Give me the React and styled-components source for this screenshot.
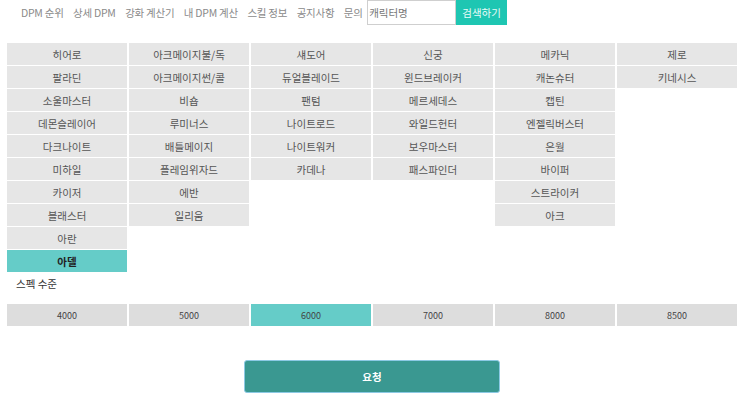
import React, { useState } from "react";
import styled, { createGlobalStyle } from "styled-components";

const GlobalStyle = createGlobalStyle`
  body {
    margin: 0;
    background: #fff;
    font-family: "Noto Sans CJK KR", "Noto Sans", sans-serif;
  }
`;

const Page = styled.div`
  width: 743px;
  padding: 0 6px 0 7px;
  box-sizing: border-box;
`;

const Nav = styled.div`
  display: flex;
  align-items: center;
  height: 25px;
  padding-left: 14px;
  gap: 9.5px;
`;

const NavLink = styled.span`
  font-size: 10.5px;
  color: #8a8a8a;
  white-space: nowrap;
  letter-spacing: -0.25px;
`;

const Search = styled.div`
  display: flex;
  height: 25px;
  margin-left: -5px;
`;

const SearchInput = styled.input`
  width: 89px;
  height: 25px;
  box-sizing: border-box;
  border: 1px solid #cfcfcf;
  padding: 0 1px;
  font-family: inherit;
  font-size: 10.5px;
  color: #555;
  outline: none;
  &::placeholder {
    color: #777;
  }
`;

const SearchButton = styled.button`
  width: 51px;
  height: 25px;
  border: 0;
  background: #1ec6b2;
  color: #e9fbf8;
  font-family: inherit;
  font-size: 10.5px;
  padding: 0;
`;

const JobGrid = styled.div`
  display: flex;
  gap: 2px;
  margin-top: 18px;
  align-items: flex-start;
`;

const JobColumn = styled.div`
  display: flex;
  flex-direction: column;
  gap: 1px;
  width: 120px;
`;

const Cell = styled.div`
  height: 22px;
  display: flex;
  align-items: center;
  justify-content: center;
  font-size: 10.5px;
  color: ${(p) => (p.$active ? "#222" : "#555")};
  font-weight: ${(p) => (p.$active ? 700 : 400)};
  background: ${(p) => (p.$active ? "#65ccc8" : "#e6e6e6")};
  cursor: pointer;
`;

const Label = styled.div`
  font-size: 10.5px;
  color: #333;
  padding: 5px 9px 0;
  line-height: 14px;
  height: 32px;
  box-sizing: border-box;
`;

const SpecRow = styled.div`
  display: flex;
  gap: 2px;
`;

const SpecCell = styled.div`
  width: 120px;
  height: 22px;
  display: flex;
  align-items: center;
  justify-content: center;
  font-size: 9px;
  color: #444;
  background: ${(p) => (p.$active ? "#65ccc8" : "#dddddd")};
  cursor: pointer;
`;

const Footer = styled.div`
  display: flex;
  justify-content: center;
  margin-top: 34px;
`;

const RequestButton = styled.button`
  width: 256px;
  height: 33px;
  border: 1px solid #8cc9e4;
  border-radius: 3px;
  background: #3a9891;
  color: #fff;
  font-family: inherit;
  font-size: 10.5px;
  font-weight: 700;
`;

const navItems = ["DPM 순위", "상세 DPM", "강화 계산기", "내 DPM 계산", "스킬 정보", "공지사항", "문의"];

const columns = [
  ["히어로", "팔라딘", "소울마스터", "데몬슬레이어", "다크나이트", "미하일", "카이저", "블래스터", "아란", "아델"],
  ["아크메이지불/독", "아크메이지썬/콜", "비숍", "루미너스", "배틀메이지", "플레임위자드", "에반", "일리움"],
  ["섀도어", "듀얼블레이드", "팬텀", "나이트로드", "나이트워커", "카데나"],
  ["신궁", "윈드브레이커", "메르세데스", "와일드헌터", "보우마스터", "패스파인더"],
  ["메카닉", "캐논슈터", "캡틴", "엔젤릭버스터", "은월", "바이퍼", "스트라이커", "아크"],
  ["제로", "키네시스"],
];

const specs = ["4000", "5000", "6000", "7000", "8000", "8500"];

export default function App() {
  const [job, setJob] = useState("아델");
  const [spec, setSpec] = useState("6000");

  return (
    <Page>
      <GlobalStyle />
      <Nav>
        {navItems.map((n) => (
          <NavLink key={n}>{n}</NavLink>
        ))}
        <Search>
          <SearchInput placeholder="캐릭터명" />
          <SearchButton>검색하기</SearchButton>
        </Search>
      </Nav>
      <JobGrid>
        {columns.map((col, i) => (
          <JobColumn key={i}>
            {col.map((name) => (
              <Cell key={name} $active={name === job} onClick={() => setJob(name)}>
                {name}
              </Cell>
            ))}
          </JobColumn>
        ))}
      </JobGrid>
      <Label>스펙 수준</Label>
      <SpecRow>
        {specs.map((s) => (
          <SpecCell key={s} $active={s === spec} onClick={() => setSpec(s)}>
            {s}
          </SpecCell>
        ))}
      </SpecRow>
      <Footer>
        <RequestButton>요청</RequestButton>
      </Footer>
    </Page>
  );
}
